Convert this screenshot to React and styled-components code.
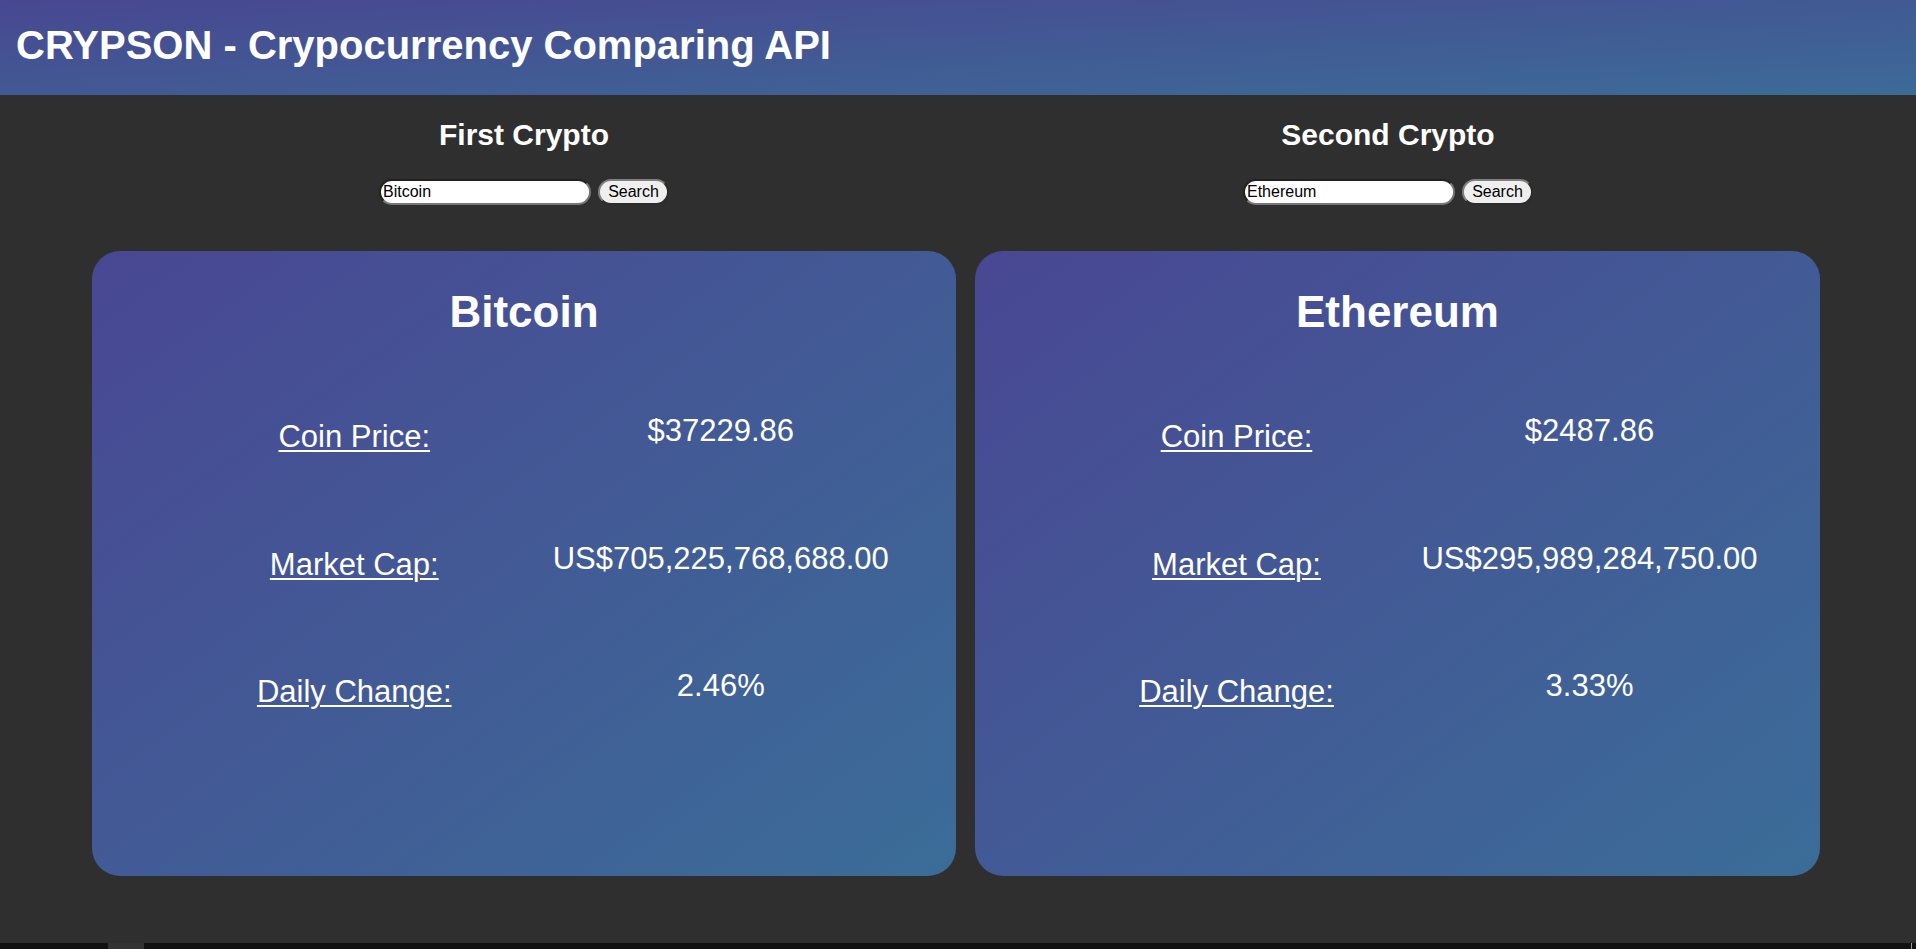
import React from "react";
import styled, { createGlobalStyle } from "styled-components";

const GlobalStyle = createGlobalStyle`
  html, body {
    margin: 0;
    padding: 0;
    background: #2f2f2f;
    font-family: "Liberation Sans", Arial, sans-serif;
    color: #ffffff;
  }
  * { box-sizing: border-box; }
`;

const Page = styled.div`
  min-height: 100vh;
  display: flex;
  flex-direction: column;
  background: #2f2f2f;
`;

const Header = styled.header`
  height: 95px;
  padding: 22px 16px 0;
  background: linear-gradient(to bottom right, #484791, #3c6b97);
`;

const Title = styled.h1`
  margin: 0;
  font-size: 40px;
  line-height: 46px;
  font-weight: 700;
  color: #ffffff;
`;

const Main = styled.main`
  flex: 1;
  display: grid;
  grid-template-columns: 864px 864px;
  padding-left: 92px;
  align-content: start;
`;

const Column = styled.section`
  display: flex;
  flex-direction: column;
  align-items: center;
`;

const Heading = styled.h2`
  margin: 23px 0 0;
  font-size: 30px;
  line-height: 34px;
  font-weight: 700;
  color: #ffffff;
`;

const SearchForm = styled.form`
  margin-top: 27px;
  display: flex;
  align-items: center;
  gap: 7px;
`;

const SearchInput = styled.input`
  width: 212px;
  height: 26px;
  padding: 0 2px;
  border: 2px inset #767676;
  border-radius: 13px;
  background: #ffffff;
  color: #000000;
  font-family: "Liberation Sans", Arial, sans-serif;
  font-size: 16px;
  outline: none;
`;

const SearchButton = styled.button`
  width: 71px;
  height: 26px;
  padding: 0;
  border: 2px outset #808080;
  border-radius: 13px;
  background: #efefef;
  color: #000000;
  font-family: "Liberation Sans", Arial, sans-serif;
  font-size: 16px;
  cursor: pointer;
`;

const Card = styled.article`
  align-self: stretch;
  margin: 46px 0 0 ${(p) => p.$offset}px;
  height: 625px;
  padding-top: 36px;
  border-radius: 28px;
  background: linear-gradient(to bottom right, #494793, #3b6d98);
`;

const CoinName = styled.h1`
  margin: 0;
  text-align: center;
  font-size: 44px;
  line-height: 50px;
  font-weight: 700;
  color: #ffffff;
`;

const Stats = styled.div`
  margin-top: 76px;
  padding: 0 ${(p) => p.$right}px 0 ${(p) => p.$left}px;
  display: grid;
  grid-template-columns: 1fr 1fr;
  row-gap: 85.5px;
  align-items: start;
`;

const Label = styled.span`
  margin-top: 6px;
  text-align: center;
  font-size: 31px;
  line-height: 36px;
  text-decoration: underline;
  text-decoration-thickness: 2px;
  text-underline-offset: 3px;
  color: #ffffff;
`;

const Value = styled.span`
  text-align: center;
  font-size: 31px;
  line-height: 36px;
  color: #ffffff;
  white-space: nowrap;
`;

const ScrollBar = styled.div`
  height: 6px;
  background: #111111;
  display: flex;
  justify-content: space-between;
`;

const Thumb = styled.div`
  margin-left: 108px;
  width: 36px;
  height: 100%;
  background: #333333;
`;

const Grip = styled.div`
  margin-right: 4px;
  width: 1px;
  height: 100%;
  background: #9a9a9a;
`;

const coins = [
  {
    heading: "First Crypto",
    query: "Bitcoin",
    name: "Bitcoin",
    price: "$37229.86",
    cap: "US$705,225,768,688.00",
    change: "2.46%",
    offset: 0,
    left: 79,
    right: 52,
  },
  {
    heading: "Second Crypto",
    query: "Ethereum",
    name: "Ethereum",
    price: "$2487.86",
    cap: "US$295,989,284,750.00",
    change: "3.33%",
    offset: 19,
    left: 85,
    right: 54,
  },
];

export default function App() {
  return (
    <>
      <GlobalStyle />
      <Page>
        <Header>
          <Title>CRYPSON - Crypocurrency Comparing API</Title>
        </Header>
        <Main>
          {coins.map((c) => (
            <Column key={c.name}>
              <Heading>{c.heading}</Heading>
              <SearchForm onSubmit={(e) => e.preventDefault()}>
                <SearchInput type="text" defaultValue={c.query} />
                <SearchButton type="submit">Search</SearchButton>
              </SearchForm>
              <Card $offset={c.offset}>
                <CoinName>{c.name}</CoinName>
                <Stats $left={c.left} $right={c.right}>
                  <Label>Coin Price:</Label>
                  <Value>{c.price}</Value>
                  <Label>Market Cap:</Label>
                  <Value>{c.cap}</Value>
                  <Label>Daily Change:</Label>
                  <Value>{c.change}</Value>
                </Stats>
              </Card>
            </Column>
          ))}
        </Main>
        <ScrollBar>
          <Thumb />
          <Grip />
        </ScrollBar>
      </Page>
    </>
  );
}
